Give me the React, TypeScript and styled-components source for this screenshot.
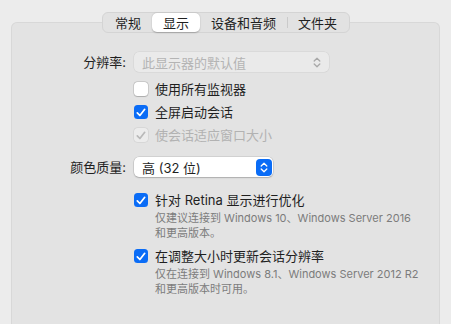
import React from "react";
import styled, { createGlobalStyle } from "styled-components";

const Global = createGlobalStyle`
  html, body { margin: 0; padding: 0; background: #ececec; }
  body { font-family: Inter, "Noto Sans CJK SC", sans-serif; -webkit-font-smoothing: antialiased; }
`;

const Window = styled.div`
  width: 451px;
  height: 324px;
  overflow: hidden;
  background: #ececec;
  padding: 12px 11px 0 11px;
  box-sizing: border-box;
  display: flex;
  flex-direction: column;
`;

const TabBar = styled.div`
  align-self: flex-start;
  margin-left: 91px;
  height: 21px;
  box-sizing: border-box;
  display: flex;
  align-items: center;
  padding: 0 1px;
  background: #e2e2e2;
  border: 1px solid #d4d4d4;
  border-radius: 6px;
  margin-bottom: -11px;
  position: relative;
  z-index: 1;
`;

const Tab = styled.div<{ $active?: boolean; $sep?: boolean }>`
  height: 19px;
  padding: 0 11px;
  display: flex;
  align-items: center;
  font-size: 13px;
  color: #1f1f1f;
  border-radius: 5px;
  position: relative;
  background: ${(p) => (p.$active ? "#ffffff" : "transparent")};
  box-shadow: ${(p) => (p.$active ? "0 0.5px 1.5px rgba(0,0,0,0.25)" : "none")};
  &::before {
    content: "";
    display: ${(p) => (p.$sep ? "block" : "none")};
    position: absolute;
    left: -0.5px;
    top: 4px;
    width: 1px;
    height: 11px;
    background: #cacaca;
  }
`;

const Box = styled.div`
  flex: 1;
  background: #e3e3e3;
  border: 1px solid #d8d8d8;
  border-bottom: none;
  border-radius: 6px 6px 0 0;
  padding-top: 29px;
`;

const Form = styled.div`
  display: grid;
  grid-template-columns: 114px 1fr;
  column-gap: 8px;
  align-items: start;
`;

const Label = styled.div<{ $mt?: number }>`
  text-align: right;
  font-size: 13px;
  line-height: 20px;
  color: #1f1f1f;
  margin-top: ${(p) => p.$mt ?? 0}px;
`;

const Controls = styled.div<{ $mt?: number }>`
  display: flex;
  flex-direction: column;
  margin-top: ${(p) => p.$mt ?? 0}px;
`;

const Popup = styled.div<{ $width: number; $disabled?: boolean }>`
  width: ${(p) => p.$width}px;
  height: 20px;
  box-sizing: border-box;
  border-radius: 5px;
  display: flex;
  align-items: center;
  justify-content: space-between;
  padding: 0 1px 0 8px;
  font-size: 13px;
  color: ${(p) => (p.$disabled ? "#b4b4b4" : "#1f1f1f")};
  background: ${(p) => (p.$disabled ? "#eaeaea" : "#ffffff")};
  box-shadow: ${(p) =>
    p.$disabled
      ? "0 0 0 0.5px rgba(0,0,0,0.08)"
      : "0 0 0 0.5px rgba(0,0,0,0.15), 0 1px 1.5px rgba(0,0,0,0.18)"};
`;

const Stepper = styled.div<{ $blue?: boolean }>`
  width: 16px;
  height: 17px;
  border-radius: 4px;
  display: flex;
  align-items: center;
  justify-content: center;
  background: ${(p) => (p.$blue ? "#0a6cf6" : "transparent")};
  margin-right: ${(p) => (p.$blue ? 0 : 3)}px;
`;

const CheckRow = styled.div<{ $mt?: number }>`
  display: flex;
  align-items: flex-start;
  gap: 7px;
  margin-top: ${(p) => p.$mt ?? 0}px;
`;

const Box14 = styled.div<{ $checked?: boolean; $disabled?: boolean }>`
  width: 14px;
  height: 14px;
  flex: none;
  margin-top: 3px;
  box-sizing: border-box;
  border-radius: 3.5px;
  display: flex;
  align-items: center;
  justify-content: center;
  background: ${(p) =>
    p.$disabled ? "#ececec" : p.$checked ? "#0a6cf6" : "#ffffff"};
  box-shadow: ${(p) =>
    p.$disabled
      ? "0 0 0 0.5px rgba(0,0,0,0.1)"
      : p.$checked
      ? "none"
      : "0 0 0 0.5px rgba(0,0,0,0.2), 0 0.5px 1px rgba(0,0,0,0.15)"};
`;

const CheckText = styled.div`
  display: flex;
  flex-direction: column;
`;

const CheckLabel = styled.div<{ $disabled?: boolean }>`
  font-size: 13px;
  line-height: 20px;
  color: ${(p) => (p.$disabled ? "#b2b2b2" : "#1f1f1f")};
`;

const Help = styled.div`
  font-size: 11px;
  line-height: 14.5px;
  color: #7c7c7c;
  margin-top: 1px;
`;

const Chevrons = ({ color }: { color: string }) => (
  <svg width="8" height="11" viewBox="0 0 8 11" fill="none">
    <path d="M1.2 4 L4 1.3 L6.8 4" stroke={color} strokeWidth="1.3" strokeLinecap="round" strokeLinejoin="round" />
    <path d="M1.2 7 L4 9.7 L6.8 7" stroke={color} strokeWidth="1.3" strokeLinecap="round" strokeLinejoin="round" />
  </svg>
);

const Check = ({ color }: { color: string }) => (
  <svg width="10" height="9" viewBox="0 0 10 9" fill="none">
    <path d="M1.3 4.8 L3.9 7.5 L8.7 1.3" stroke={color} strokeWidth="1.7" strokeLinecap="round" strokeLinejoin="round" />
  </svg>
);

type CbProps = { checked?: boolean; disabled?: boolean; label: string; help?: string[]; mt?: number };

const Checkbox = ({ checked, disabled, label, help, mt }: CbProps) => (
  <CheckRow $mt={mt}>
    <Box14 $checked={checked} $disabled={disabled}>
      {checked && <Check color={disabled ? "#b9b9b9" : "#ffffff"} />}
    </Box14>
    <CheckText>
      <CheckLabel $disabled={disabled}>{label}</CheckLabel>
      {help && (
        <Help>
          {help.map((h) => (
            <div key={h}>{h}</div>
          ))}
        </Help>
      )}
    </CheckText>
  </CheckRow>
);

export default function App() {
  return (
    <>
      <Global />
      <Window>
        <TabBar>
          <Tab>常规</Tab>
          <Tab $active>显示</Tab>
          <Tab>设备和音频</Tab>
          <Tab $sep>文件夹</Tab>
        </TabBar>
        <Box>
          <Form>
            <Label>分辨率:</Label>
            <Controls>
              <Popup $width={195} $disabled>
                <span>此显示器的默认值</span>
                <Stepper>
                  <Chevrons color="#a8a8a8" />
                </Stepper>
              </Popup>
              <Checkbox label="使用所有监视器" mt={7} />
              <Checkbox label="全屏启动会话" checked mt={3} />
              <Checkbox label="使会话适应窗口大小" checked disabled mt={3} />
            </Controls>
            <Label $mt={12}>颜色质量:</Label>
            <Controls $mt={12}>
              <Popup $width={139}>
                <span>高 (32 位)</span>
                <Stepper $blue>
                  <Chevrons color="#ffffff" />
                </Stepper>
              </Popup>
              <Checkbox
                label="针对 Retina 显示进行优化"
                checked
                mt={13}
                help={["仅建议连接到 Windows 10、Windows Server 2016", "和更高版本。"]}
              />
              <Checkbox
                label="在调整大小时更新会话分辨率"
                checked
                mt={6}
                help={["仅在连接到 Windows 8.1、Windows Server 2012 R2", "和更高版本时可用。"]}
              />
            </Controls>
          </Form>
        </Box>
      </Window>
    </>
  );
}
